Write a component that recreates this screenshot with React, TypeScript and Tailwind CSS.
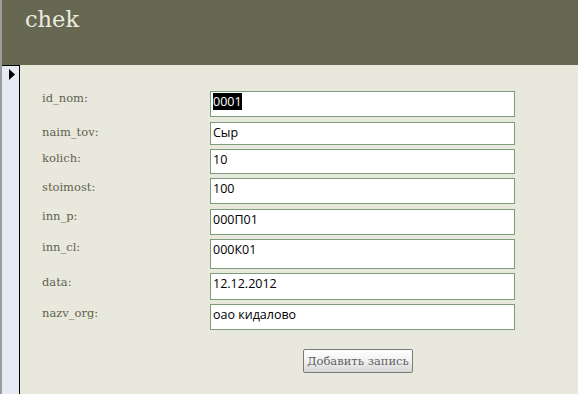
const rows = [
  { label: 'id_nom:', value: '0001', h: 'h-[26px]', mt: 'mt-0', lt: 'pt-[0px]', selected: true },
  { label: 'naim_tov:', value: 'Сыр', h: 'h-[23px]', mt: 'mt-[5px]', lt: 'pt-[3px]' },
  { label: 'kolich:', value: '10', h: 'h-[25px]', mt: 'mt-[4px]', lt: 'pt-[2px]' },
  { label: 'stoimost:', value: '100', h: 'h-[26px]', mt: 'mt-[4px]', lt: 'pt-[2px]' },
  { label: 'inn_p:', value: '000П01', h: 'h-[26px]', mt: 'mt-[5px]', lt: 'pt-[0px]' },
  { label: 'inn_cl:', value: '000К01', h: 'h-[30px]', mt: 'mt-[4px]', lt: 'pt-[1px]' },
  { label: 'data:', value: '12.12.2012', h: 'h-[27px]', mt: 'mt-[4px]', lt: 'pt-[2px]' },
  { label: 'nazv_org:', value: 'оао кидалово', h: 'h-[26px]', mt: 'mt-[4px]', lt: 'pt-[2px]' },
];

export default function App() {
  return (
    <div className="flex h-[394px] w-[578px] overflow-hidden bg-[#e9e8dd]">
      {/* window edge */}
      <div className="w-[2px] shrink-0 bg-[#9c9c9c]" />

      <div className="flex flex-1 flex-col">
        {/* form header */}
        <div className="h-[65px] shrink-0 bg-[#666852] pl-[23px] pt-[3px]">
          <h1 className="font-['DejaVu_Serif',serif] text-[22.5px] leading-[32px] text-[#ecece0]">chek</h1>
        </div>

        <div className="flex flex-1">
          {/* record selector */}
          <div className="w-[18px] shrink-0 border-r border-t border-black bg-[#e6eaf2] pl-[7px] pt-[3px]">
            <svg width="6" height="11" viewBox="0 0 6 11">
              <path d="M0 0 L6 5.5 L0 11 Z" fill="#000" />
            </svg>
          </div>

          {/* detail section */}
          <div className="flex-1 pl-[22px] pt-[26px] font-['DejaVu_Serif',serif]">
            {rows.map((row) => (
              <div key={row.label} className={`flex ${row.mt}`}>
                <div className={`w-[168px] shrink-0 text-[11.5px] leading-[15px] text-[#626250] ${row.lt}`}>
                  {row.label}
                </div>
                <div
                  className={`w-[305px] ${row.h} border border-[#7d9c79] bg-white pl-[2px] pt-[1px] font-['Open_Sans',sans-serif] text-[12.5px] leading-[17px] text-black`}
                >
                  {row.selected ? <span className="bg-black text-white">{row.value}</span> : row.value}
                </div>
              </div>
            ))}

            <div className="mt-[19px] flex pl-[261px]">
              <button className="h-[24px] w-[110px] rounded-[2px] border border-[#7a7a7a] bg-gradient-to-b from-white via-[#f1f1f1] to-[#d6d6d6] font-['DejaVu_Serif',serif] text-[11.5px] leading-[20px] text-[#606060]">
                Добавить запись
              </button>
            </div>
          </div>
        </div>
      </div>
    </div>
  );
}
